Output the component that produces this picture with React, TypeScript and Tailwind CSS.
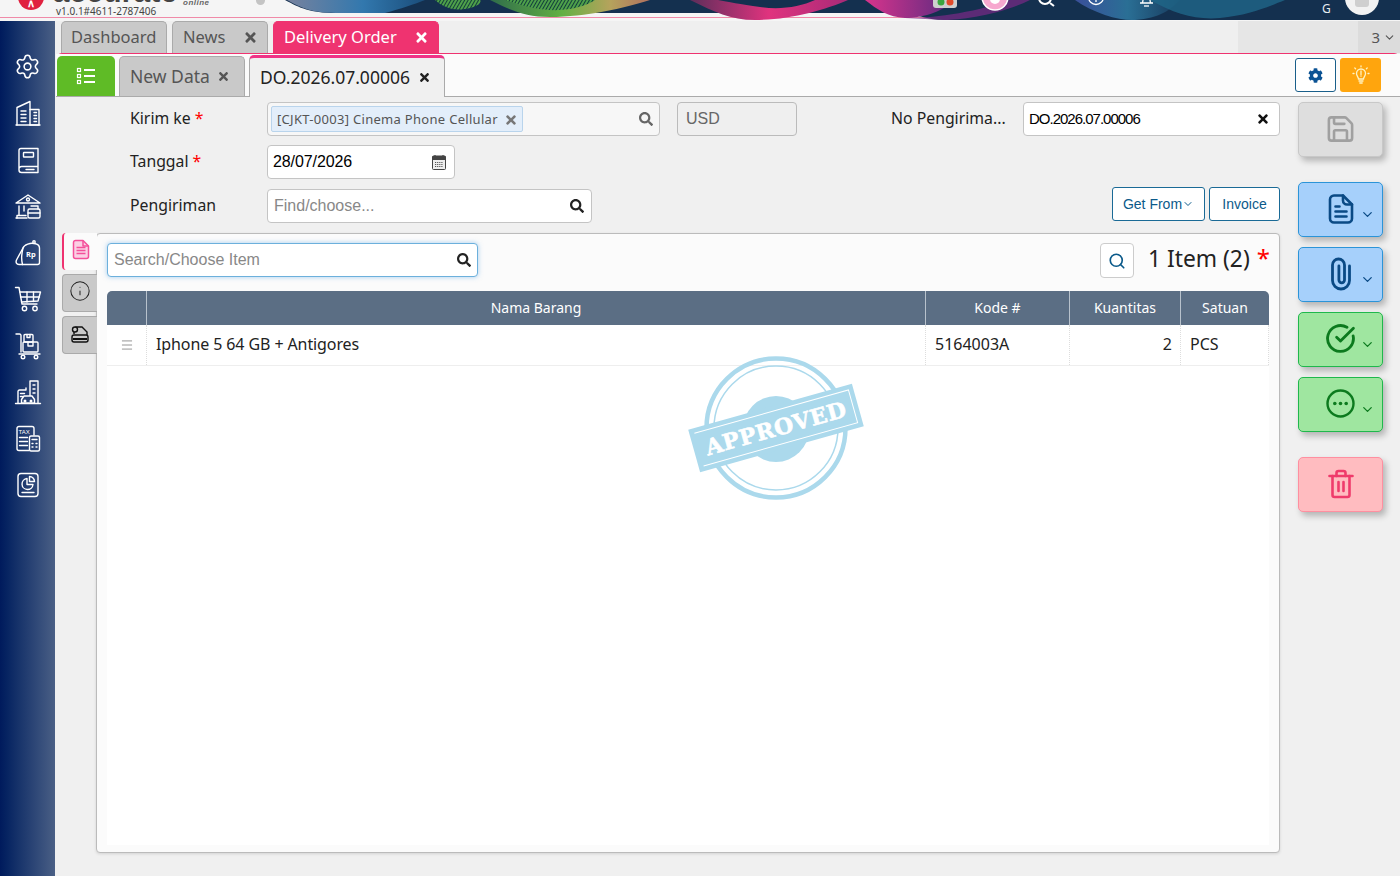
import React from "react";
import { Settings, Info, Save, CircleCheckBig, ChevronDown, Search, Menu } from "lucide-react";
import { FaTimes, FaSearch, FaCog } from "react-icons/fa";

const noto = "font-['Noto_Sans',sans-serif]";
const lib = "font-['Liberation_Sans',sans-serif]";

const S = ({ children }: { children: React.ReactNode }) => (
  <svg width="28" height="28" viewBox="0 0 28 28" fill="none" stroke="#fff" strokeWidth="1.400" strokeLinecap="round" strokeLinejoin="round">{children}</svg>
);

const sideIcons = [
  <Settings key="a" size={27} color="#fff" strokeWidth={1.400} />,
  <S key="b"><path d="M3 26V8.500L16 2.500V26" /><path d="M16 10.500h9v15.500h-9" /><path d="M2 26h24" /><path d="M7 12h5M7 15.500h5M7 19h5M7 22.500h5" /><path d="M20 13.500h2.500M20 16.500h2.500M20 19.500h2.500M20 22.500h2.500" /></S>,
  <S key="c"><path d="M5 23V4.500A2 2 0 0 1 7 2.500h17v24H7.500A2.500 2.500 0 0 1 5 24v-1a2.500 2.500 0 0 1 2.500-2.500H24" /><rect x="9.500" y="6.500" width="10" height="4.500" rx="0.500" /><path d="M12 23.500h8" /></S>,
  <S key="d"><path d="M2 11 14 3l12 8H2Z" /><circle cx="14" cy="7.500" r="1.500" /><path d="M5 14v9M10 14v5M2 26h11" /><path d="M3 26v-2.500h9" /><rect x="14" y="17" width="12" height="9" rx="1.500" /><path d="M14 21h12M17 14h7v3" /></S>,
  <g key="e"></g>,
  <S key="f"><path d="M1.500 2.500H5l3 16.500h15" /><path d="M6 7h20.500l-2.500 9-16.500 1" /><path d="M13 7v10M19.500 7v9.500M6.500 12h19" /><circle cx="10.500" cy="23.500" r="2.200" /><circle cx="21" cy="23.500" r="2.200" /></S>,
  <S key="g"><path d="M2 2h3.500A1.500 1.500 0 0 1 7 3.500V20" /><rect x="10" y="2.500" width="9" height="7.500" rx="1" /><path d="M13 2.500v3h3v-3" /><rect x="9" y="10" width="15" height="10" rx="1" /><path d="M14 10v4h5v-4" /><path d="M5 22h21" /><circle cx="9" cy="25" r="1.800" /><circle cx="22" cy="25" r="1.800" /></S>,
  <S key="h"><path d="M1.500 25.500h25" /><path d="M4 25V13.500a1.500 1.500 0 0 1 1.500-1.500H12V10" /><path d="M16 18V3h8v22" /><path d="M19 7h2M19 11h2M19 15h2M6.500 15.500h4M6.500 18.500h2" /><path d="M7.500 25v-3.500l2.500-3.500h8l2.500 3.500V25Z" fill="#2a4576" /><circle cx="11" cy="23" r="0.800" /><circle cx="17" cy="23" r="0.800" /></S>,
  <svg key="i" width="28" height="28" viewBox="0 0 28 28" fill="none" stroke="#fff" strokeWidth="1.400" strokeLinecap="round" strokeLinejoin="round"><path d="M15 25.500H5a2 2 0 0 1-2-2V3.500a2 2 0 0 1 2-2h13a2 2 0 0 1 2 2V10" /><text x="4.500" y="8.500" fontSize="6" fill="#fff" stroke="none" fontFamily="Liberation Sans">TAX</text><path d="M5.500 12.500h8M5.500 16.500h8M5.500 20.500h8" /><rect x="15.500" y="11" width="10" height="15" rx="1.500" /><path d="M18 14.500h5M18 18.500h1M22 18.500h1M18 22h1M22 22h1" /></svg>,
  <S key="j"><rect x="4" y="2.500" width="20" height="23" rx="3" /><path d="M8 21.500h12" /><path d="M13 7.500a5.500 5.500 0 1 0 6 6h-6Z" /><path d="M15.500 5.500a5 5 0 0 1 5 5h-5Z" /></S>,
];

const BagRp = () => (
  <svg width="28" height="28" viewBox="0 0 28 28" fill="none" stroke="#fff" strokeWidth="1.400" strokeLinecap="round" strokeLinejoin="round">
    <path d="M9 9 2.500 21c-1 2.500 0 4.500 2.500 4.500h18.500a2 2 0 0 0 2-2V9c0-2.500-2-4-5-4.500" />
    <path d="M8.500 25.500C7 20 8 13 9 9c1-3.500 8-5.500 11-4.500" />
    <circle cx="20" cy="3" r="1.200" />
    <text x="12" y="18" fontSize="7.500" fontWeight="700" fill="#fff" stroke="none" fontFamily="Noto Sans">Rp</text>
  </svg>
);

const Tab = ({ label, close, active, tight }: { label: string; close?: boolean; active?: boolean; tight?: boolean }) => (
  <div className={`flex h-[32px] items-center justify-between rounded-t-[5px] border border-b-0 pr-[9px] text-[16.500px] ${tight ? "pl-[9px]" : "pl-[10px]"} ${noto} ${active ? "border-[#ef3370] bg-[#ef3370] text-white" : "border-[#aaa] bg-[#c9c9c9] text-[#555]"}`}>
    <span>{label}</span>
    {close && <FaTimes size={15} className="ml-[16px]" color={active ? "#fff" : "#555"} />}
  </div>
);

const Req = () => <span className="ml-[4px] text-[#f00]">*</span>;

const ActionBtn = ({ cls, icon, chev, color }: { cls: string; icon: React.ReactNode; chev?: boolean; color?: string }) => (
  <div className={`flex h-[55px] w-[85px] items-center justify-center rounded-[5px] border shadow-[3px_4px_6px_rgba(0,0,0,0.25)] ${cls}`}>
    <div className="-mt-[2px] flex w-[31px] items-center justify-center">{icon}</div>
    {chev && <div className="mt-[10px] ml-[4px] -mr-[20px] w-[16px]"><ChevronDown size={15} color={color} strokeWidth={2} /></div>}
  </div>
);

const DocIcon = () => (
  <svg width="30" height="32" viewBox="0 0 30 32" fill="none" stroke="#0a4a85" strokeWidth="2.600" strokeLinecap="round" strokeLinejoin="round">
    <path d="M17 2.500H8a4 4 0 0 0-4 4v19a4 4 0 0 0 4 4h14a4 4 0 0 0 4-4V11.500Z" />
    <path d="M17 2.500v5a4 4 0 0 0 4 4h5" />
    <path d="M9.500 13.500h4M9.500 18.500h11M9.500 23.500h11" />
  </svg>
);

const Paperclip2 = () => (
  <svg width="24" height="34" viewBox="0 0 24 34" fill="none" stroke="#0a4a85" strokeWidth="2.800" strokeLinecap="round">
    <path d="M20.500 9v14.500a8.500 8.500 0 0 1-17 0V8a6 6 0 0 1 12 0v15a2.800 2.800 0 0 1-5.600 0V9" />
  </svg>
);

const EllipsisIcon = () => (
  <svg width="31" height="31" viewBox="0 0 31 31" fill="none" stroke="#0c7a1e" strokeWidth="2.400">
    <circle cx="15.500" cy="15.500" r="13" />
    <circle cx="9.800" cy="15.500" r="1.800" fill="#0c7a1e" stroke="none" /><circle cx="15.500" cy="15.500" r="1.800" fill="#0c7a1e" stroke="none" /><circle cx="21.200" cy="15.500" r="1.800" fill="#0c7a1e" stroke="none" />
  </svg>
);

const TrashIcon = () => (
  <svg width="28" height="30" viewBox="0 0 28 30" fill="none" stroke="#ef3b6b" strokeWidth="2.600" strokeLinecap="round" strokeLinejoin="round">
    <path d="M2.500 7h23" /><path d="M9.500 7V4a2 2 0 0 1 2-2h5a2 2 0 0 1 2 2v3" /><path d="M5.500 7v19a2 2 0 0 0 2 2h13a2 2 0 0 0 2-2V7" /><path d="M11.500 13v9M16.500 13v9" />
  </svg>
);

const CalIcon = () => (
  <svg width="14" height="15" viewBox="0 0 14 15">
    <rect x="0.500" y="1" width="13" height="13.500" rx="1" fill="#eee" stroke="#444" />
    <rect x="0.500" y="1" width="13" height="4" fill="#444" />
    <path d="M3 0v2.500M11 0v2.500" stroke="#444" strokeWidth="1.200" />
    <path d="M3 7.500h8M3 9.500h8M3 11.500h8" stroke="#555" strokeWidth="1" strokeDasharray="1.200 0.900" />
  </svg>
);

const Bulb = () => (
  <svg width="18" height="20" viewBox="0 0 18 20" fill="none" stroke="#fff3c4" strokeWidth="1.300" strokeLinecap="round">
    <path d="M6.500 14c0-2-2-3-2-5.500a4.500 4.500 0 0 1 9 0C13.500 11 11.500 12 11.500 14Z" />
    <path d="M7 16h4M7.800 18h2.400" />
    <path d="M9 6v3.500M9 11v.2" />
    <path d="M9 .8v1M2.800 3l.8.7M15.200 3l-.8.7M1 8.500h1M16 8.500h1" />
  </svg>
);

const Banner = () => (
  <svg className="absolute left-0 top-0" width="1400" height="21" viewBox="0 0 1400 21">
    <defs>
      <linearGradient id="bl" x1="0" x2="1"><stop offset="0" stopColor="#77829e" /><stop offset="0.55" stopColor="#3278ae" /><stop offset="1" stopColor="#1a4d7a" /></linearGradient>
      <linearGradient id="gr" x1="0" x2="1"><stop offset="0" stopColor="#2f6d4a" /><stop offset="0.45" stopColor="#63b044" /><stop offset="0.75" stopColor="#b5a35c" /><stop offset="1" stopColor="#b0705f" /></linearGradient>
      <linearGradient id="pk" x1="0" x2="1"><stop offset="0" stopColor="#5c2e5a" /><stop offset="0.5" stopColor="#e0337e" /><stop offset="1" stopColor="#a82a78" /></linearGradient>
      <linearGradient id="mg" x1="0" x2="1"><stop offset="0" stopColor="#d8348c" /><stop offset="1" stopColor="#5a2a80" /></linearGradient>
      <linearGradient id="tl" x1="0" x2="1"><stop offset="0" stopColor="#3a4f9a" /><stop offset="0.5" stopColor="#2a6f95" /><stop offset="1" stopColor="#17395c" /></linearGradient>
      <pattern id="ht" width="3" height="3" patternUnits="userSpaceOnUse" patternTransform="rotate(30)"><rect width="3" height="3" fill="#4ea04a" /><rect width="1" height="3" fill="#123f3a" /></pattern>
    </defs>
    <path d="M285 0C300 8 310 13 335 13H900C915 13 925 20 945 20H1400V0Z" fill="#14304f" />
    <path d="M287 0C305 10 315 13 340 13H385C400 9 415 4 425 0Z" fill="url(#bl)" />
    <path d="M435 0C447 10 457 11 470 8C480 5 482 2 480 0Z" fill="url(#ht)" />
    <path d="M490 0C510 10 525 17 550 17C585 17 625 8 650 0Z" fill="url(#gr)" />
    <path d="M505 0C530 9 550 12 570 9C585 6 590 3 595 0Z" fill="url(#ht)" />
    <path d="M690 0C715 12 730 20 755 20C790 20 825 10 848 0H815C800 7 780 10 760 7C740 4 728 2 718 0Z" fill="url(#pk)" />
    <path d="M865 0C878 10 888 17 905 18C925 18 945 10 955 0Z" fill="url(#mg)" />
    <path d="M905 18C930 18 970 14 1010 0H1030C1000 15 960 20 945 20Z" fill="#7a2a88" opacity="0.7" />
    <path d="M1075 0C1095 14 1120 21 1135 20C1160 18 1170 10 1180 0Z" fill="url(#tl)" />
    <path d="M1150 0C1175 14 1195 20 1220 18C1250 15 1270 6 1285 0Z" fill="#1f6788" opacity="0.8" />
    <rect x="933" y="-6" width="24" height="14" rx="3" fill="#cfcfcf" />
    <circle cx="941" cy="2" r="3.500" fill="#3aa63f" /><circle cx="950" cy="2" r="3.500" fill="#e24a2a" />
    <circle cx="995" cy="-3" r="13" fill="#f7a8cf" stroke="#fff" strokeWidth="1.500" />
    <circle cx="995" cy="-1" r="5" fill="#fff" />
    <circle cx="1045" cy="-2" r="6" fill="none" stroke="#fff" strokeWidth="2" /><path d="M1050 3l4 3" stroke="#fff" strokeWidth="2" />
    <circle cx="1096" cy="-3" r="7.500" fill="none" stroke="#fff" strokeWidth="1.300" /><path d="M1096 0v2" stroke="#fff" strokeWidth="1.300" />
    <path d="M1140 3h13M1142 3c1-1 1-3 1-3M1151 3c-1-1-1-3-1-3" stroke="#fff" strokeWidth="1.300" fill="none" /><path d="M1144 6h5" stroke="#fff" strokeWidth="1.300" />
    <text x="1322" y="13" fontSize="12" fill="#e8edf2" fontFamily="Noto Sans">G</text>
    <circle cx="1362" cy="-2" r="17" fill="#f2f2f2" />
    <rect x="1355" y="-6" width="14" height="13" rx="3" fill="#cfcfcf" />
  </svg>
);

const Stamp = () => (
  <svg width="180" height="150" viewBox="0 0 180 150">
    <g fill="none" stroke="#abd9ec">
      <circle cx="90" cy="75" r="69.500" strokeWidth="4.500" />
      <circle cx="90" cy="75" r="62" strokeWidth="1.500" />
    </g>
    <circle cx="90" cy="76" r="33" fill="#abd9ec" />
    <g transform="rotate(-15.700 90 75)">
      <rect x="5" y="53" width="170" height="44" fill="#abd9ec" />
      <path d="M10 58h160v34H10" fill="none" stroke="#fff" strokeWidth="1" />
      <text x="90" y="83" textAnchor="middle" fontSize="22" fontWeight="700" fill="#fff" stroke="#fff" strokeWidth="0.600" letterSpacing="0.700" fontFamily="DejaVu Serif">APPROVED</text>
    </g>
  </svg>
);

export default function App() {
  return (
    <div className={`flex h-[876px] w-[1400px] flex-col overflow-hidden bg-[#f0f0f0] ${noto} text-[#222]`}>
      {/* header */}
      <header className="relative h-[21px] shrink-0 overflow-hidden bg-[#f5f5f5]">
        <div className="absolute left-0 right-[440px] top-[17px] h-[1px] bg-[#f08aa8]" />
        <Banner />
        <div className="relative flex items-start pl-[18px]">
          <div className="-mt-[16px] flex h-[26px] w-[26px] items-center justify-center rounded-full bg-[#e0213f]">
            <div className="mt-[10px] text-[11px] font-bold leading-none text-white">∧</div>
          </div>
          <div className="ml-[9px]">
            <div className={`-mt-[22px] h-[27px] w-[130px] whitespace-nowrap text-[29.500px] font-bold leading-[27px] tracking-[0.4px] text-[#444] ${lib}`}>accurate</div>
            <div className="ml-[3px] text-[10px] leading-[12px] text-[#444]">v1.0.1#4611-2787406</div>
          </div>
          <div className={`-mt-[2px] text-[8px] font-bold italic leading-[10px] tracking-[0.5px] text-[#666] ${lib}`}>online</div>
          <div className="-mt-[4px] ml-[46px] h-[9px] w-[9px] rounded-full bg-[#c4c4c4]" />
        </div>
      </header>

      <div className="flex min-h-0 flex-1">
        {/* sidebar */}
        <aside className="flex w-[55px] shrink-0 flex-col items-center bg-gradient-to-r from-[#001a5c] to-[#4a5f85] pt-[22.500px]">
          {sideIcons.map((ic, i) => (
            <div key={i} className="flex h-[46.500px] items-center justify-center">{i === 4 ? <BagRp /> : ic}</div>
          ))}
        </aside>

        <main className="flex min-w-0 flex-1 flex-col">
          {/* top tabs */}
          <div className="flex h-[32px] shrink-0 items-end bg-[#efefef] pl-[6px]">
            <div className="w-[106px]"><Tab label="Dashboard" tight /></div>
            <div className="ml-[5px] w-[96px]"><Tab label="News" close /></div>
            <div className="ml-[5px] w-[166px]"><Tab label="Delivery Order" close active /></div>
            <div className="ml-auto h-[32px] w-[120px] bg-[#e6e6e6]" />
            <div className="flex h-[32px] w-[42px] items-center justify-end gap-[3px] bg-[#dcdcdc] pr-[4px] text-[15px] text-[#555]">3<ChevronDown size={13} /></div>
          </div>

          <div className="ml-[1px] flex min-h-0 flex-1 flex-col rounded-t-[6px] border-t border-[#ef3370]">
            {/* sub tabs */}
            <div className="relative flex h-[43px] shrink-0 items-end border-b border-[#aaa] bg-[#fbfbfb]">
              <div className="ml-[1px] flex h-[40px] w-[58px] items-center justify-center rounded-t-[5px] bg-[#5fbb26]">
                <svg width="20" height="18" viewBox="0 0 20 18" fill="none" stroke="#fff">
                  <rect x="1.500" y="1.500" width="3" height="3" strokeWidth="1.200" /><rect x="1.500" y="7.500" width="3" height="3" strokeWidth="1.200" /><rect x="1.500" y="13.500" width="3" height="3" strokeWidth="1.200" />
                  <path d="M8 3h11M8 9h11M8 15h11" strokeWidth="2" />
                </svg>
              </div>
              <div className="ml-[4px] flex h-[40px] w-[126px] items-center justify-between rounded-t-[5px] border border-b-0 border-[#aaa] bg-[#c9c9c9] pl-[10px] pr-[14px] text-[17.500px] text-[#555]">
                <span>New Data</span><FaTimes size={13} color="#555" />
              </div>
              <div className="z-10 -mb-[1px] ml-[4px] flex h-[42px] w-[196px] items-center justify-between rounded-t-[5px] border border-b-0 border-t-[3px] border-[#aaa] border-t-[#ef3386] bg-[#f0f0f0] pl-[10px] pr-[13px] text-[17.500px] text-[#222]">
                <span>DO.2026.07.00006</span><FaTimes size={13} color="#222" />
              </div>
              <div className="mb-[4px] ml-auto mr-[19px] flex gap-[4px]">
                <div className="flex h-[34px] w-[41px] items-center justify-center rounded-[3px] border border-[#1a5f8a] bg-white"><FaCog size={15} color="#0b5394" /></div>
                <div className="flex h-[34px] w-[41px] items-center justify-center rounded-[3px] bg-[#ffa50d]"><Bulb /></div>
              </div>
            </div>

            <div className="flex min-h-0 flex-1">
              {/* left */}
              <div className="flex w-[1224px] shrink-0 flex-col text-[15.800px]">
                <div className="mt-[5px] flex h-[34px] items-center pl-[74px]">
                  <label className="w-[137px]">Kirim ke<Req /></label>
                  <div className="flex h-[34px] w-[393px] items-center justify-between rounded-[4px] border border-[#c4c4c4] bg-[#f7f7f7] pl-[3px] pr-[6px]">
                    <div className="flex h-[26px] w-[252px] items-center justify-between rounded-[2px] border border-[#b9d4ec] bg-[#e3eefa] pl-[5px] pr-[4px] pt-[1px] text-[13px] tracking-[0.3px] text-[#555]">
                      [CJKT-0003] Cinema Phone Cellular<FaTimes size={14} color="#777" />
                    </div>
                    <FaSearch size={14} color="#666" />
                  </div>
                  <div className={`ml-[17px] flex h-[34px] w-[120px] items-center rounded-[4px] border border-[#bbb] bg-[#efefef] pl-[8px] text-[16px] text-[#666] ${lib}`}>USD</div>
                  <label className="ml-[94px] w-[132px]">No Pengirima...</label>
                  <div className={`flex h-[34px] w-[257px] items-center justify-between rounded-[4px] border border-[#c4c4c4] bg-white pl-[5px] pr-[9px] text-[15px] tracking-[-1px] text-black ${lib}`}>
                    <span className="pt-[1px]">DO.2026.07.00006</span><FaTimes size={14} color="#111" />
                  </div>
                </div>
                <div className="mt-[9px] flex h-[34px] items-center pl-[74px]">
                  <label className="w-[137px]">Tanggal<Req /></label>
                  <div className={`flex h-[34px] w-[188px] items-center justify-between rounded-[4px] border border-[#c4c4c4] bg-white pl-[5px] pr-[8px] text-[16px] tracking-[-0.100px] text-black ${lib}`}>
                    28/07/2026<CalIcon />
                  </div>
                </div>
                <div className="mt-[10px] flex h-[34px] items-center pl-[74px]">
                  <label className="w-[137px]">Pengiriman</label>
                  <div className={`flex h-[34px] w-[325px] items-center justify-between rounded-[4px] border border-[#c4c4c4] bg-white pl-[6px] pr-[7px] text-[16px] text-[#888] ${lib}`}>
                    Find/choose...<FaSearch size={14} color="#222" />
                  </div>
                  <div className={`-mt-[4px] ml-auto flex gap-[4px] text-[14px] text-[#0b5a8a] ${lib}`}>
                    <div className="flex h-[34px] w-[93px] items-center justify-center rounded-[3px] border border-[#1a6a96] bg-white">Get From<ChevronDown size={12} /></div>
                    <div className="flex h-[34px] w-[71px] items-center justify-center rounded-[3px] border border-[#1a6a96] bg-white">Invoice</div>
                  </div>
                </div>

                <div className="mt-[10px] flex h-[620px]">
                  {/* vertical tabs */}
                  <div className="z-10 ml-[6px] flex w-[35px] shrink-0 flex-col">
                    <div className="flex h-[37px] items-start justify-center rounded-l-[4px] border-l-2 border-[#ef3370] bg-[#fbfbfb] pt-[6px]">
                      <svg width="18" height="21" viewBox="0 0 18 21" fill="#fbd0e4" stroke="#f4509a" strokeWidth="1.500" strokeLinejoin="round"><path d="M11 1.500H3.500a2 2 0 0 0-2 2v14a2 2 0 0 0 2 2h11a2 2 0 0 0 2-2V7Z" /><path d="M11 1.500V7h5.500" fill="none" /><path d="M4.500 8.500h9M4.500 11.500h9M4.500 14.500h9" fill="none" /></svg>
                    </div>
                    <div className="mt-[4px] flex h-[38px] items-start justify-center rounded-l-[4px] border border-r-0 border-[#aaa] bg-[#c9c9c9] pt-[5px]"><Info size={22} color="#222" strokeWidth={1.100} /></div>
                    <div className="mt-[4px] flex h-[38px] items-center justify-center rounded-l-[4px] border border-r-0 border-[#aaa] bg-[#c9c9c9]">
                      <svg width="20" height="20" viewBox="0 0 20 20" fill="none" stroke="#111" strokeWidth="1.400"><rect x="2" y="10" width="16" height="7" rx="2" /><path d="M3 14h14" strokeWidth="2" /><path d="M4 9V5a3 3 0 0 1 3-3h5l5 5v3" /><circle cx="5" cy="4.500" r="2.500" fill="#c9c9c9" /></svg>
                    </div>
                  </div>
                  {/* panel */}
                  <div className="relative -ml-[1px] flex flex-1 flex-col rounded-[4px] border border-[#bbb] bg-[#fbfbfb] px-[10px] pt-[9px] shadow-[0_1px_3px_rgba(0,0,0,0.12)]">
                    <div className="flex h-[35px] shrink-0 items-start">
                      <div className={`flex h-[34px] w-[371px] items-center justify-between rounded-[4px] border border-[#6cb0dc] bg-white pl-[6px] pr-[6px] text-[16px] text-[#888] shadow-[0_0_5px_rgba(80,160,230,0.5)] ${lib}`}>
                        Search/Choose Item<FaSearch size={14} color="#222" />
                      </div>
                      <div className="ml-auto flex h-[35px] w-[34px] items-center justify-center rounded-[4px] border border-[#ccc] bg-white"><Search size={18} color="#0b5a8a" strokeWidth={2.200} /></div>
                      <div className="ml-[14px] flex w-[121px] items-start whitespace-nowrap text-[22.800px] leading-[31px]">1 Item (2)<span className="ml-[7px] -mt-[1px] text-[24px] text-[#f00]">*</span></div>
                    </div>
                    <div className="mt-[13px] flex min-h-0 flex-1 flex-col bg-white">
                      <div className="flex h-[34px] shrink-0 rounded-t-[5px] bg-[#5b6e84] text-center text-[14px] leading-[34px] text-white">
                        <div className="w-[40px] border-r border-[#b8c2cc]" />
                        <div className="w-[779px] border-r border-[#b8c2cc]">Nama Barang</div>
                        <div className="w-[144px] border-r border-[#b8c2cc]">Kode #</div>
                        <div className="w-[111px] border-r border-[#b8c2cc]">Kuantitas</div>
                        <div className="flex-1">Satuan</div>
                      </div>
                      <div className="flex h-[41px] shrink-0 border-b border-[#eee] text-[16px] leading-[38px]">
                        <div className="flex w-[40px] items-center justify-center border-r border-dotted border-[#ddd]"><Menu size={14} color="#888" strokeWidth={1.500} /></div>
                        <div className="w-[779px] border-r border-dotted border-[#ddd] pl-[9px] tracking-[-0.1px]">Iphone 5 64 GB + Antigores</div>
                        <div className="w-[144px] border-r border-dotted border-[#ddd] pl-[9px]">5164003A</div>
                        <div className="w-[111px] border-r border-dotted border-[#ddd] pr-[8px] text-right">2</div>
                        <div className="flex-1 border-r border-dotted border-[#ddd] pl-[9px]">PCS</div>
                      </div>
                      <div className="flex-1" />
                    </div>
                    <div className="h-[7px] shrink-0" />
                    <div className="absolute left-[589px] top-[119px]"><Stamp /></div>
                  </div>
                </div>
              </div>

              {/* right actions */}
              <div className="flex flex-col pl-[18px] pt-[5px]">
                <ActionBtn cls="border-[#c8c8c8] bg-[#dedede]" icon={<Save size={34} color="#a0a0a0" strokeWidth={2} />} />
                <div className="mt-[25px]"><ActionBtn cls="border-[#2b94d8] bg-[#a6d0fb]" icon={<DocIcon />} chev color="#0a4a85" /></div>
                <div className="mt-[10px]"><ActionBtn cls="border-[#2b94d8] bg-[#a6d0fb]" icon={<Paperclip2 />} chev color="#0a4a85" /></div>
                <div className="mt-[10px]"><ActionBtn cls="border-[#1fb84c] bg-[#9fe6a0]" icon={<CircleCheckBig size={33} color="#0c7a1e" strokeWidth={2.200} />} chev color="#0c7a1e" /></div>
                <div className="mt-[10px]"><ActionBtn cls="border-[#1fb84c] bg-[#9fe6a0]" icon={<EllipsisIcon />} chev color="#0c7a1e" /></div>
                <div className="mt-[25px]"><ActionBtn cls="border-[#ff8fa0] bg-[#ffbcc0]" icon={<TrashIcon />} /></div>
              </div>
            </div>
          </div>
        </main>
      </div>
    </div>
  );
}
